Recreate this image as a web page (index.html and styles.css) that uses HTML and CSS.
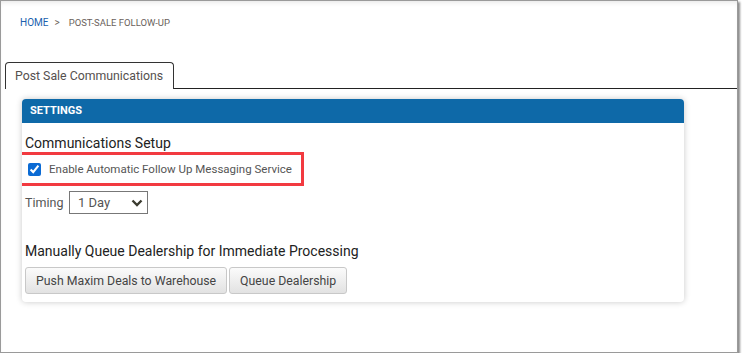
FILE: index.html
```html
<!DOCTYPE html>
<html lang="en">
<head>
    <meta charset="UTF-8">
    <meta name="viewport" content="width=device-width, initial-scale=1.0">
    <title>Post-Sale Follow-Up</title>
    <link rel="stylesheet" href="styles.css">
</head>
<body>
    <div class="frame">
        <!-- Breadcrumb -->
        <div class="crumbs">
            <a class="crumb-home" href="#">HOME</a>
            <span class="crumb-sep">&gt;</span>
            <span class="crumb-current">POST-SALE FOLLOW-UP</span>
        </div>

        <!-- Tabs -->
        <div class="tabs">
            <div class="tab active">Post Sale Communications</div>
        </div>

        <!-- Settings panel -->
        <div class="panel">
            <div class="panel-header">SETTINGS</div>
            <div class="panel-body">
                <div class="section-title">Communications Setup</div>
                <div class="highlight">
                    <label class="check-row">
                        <input type="checkbox" checked>
                        <span>Enable Automatic Follow Up Messaging Service</span>
                    </label>
                </div>
                <div class="timing-row">
                    <span class="label">Timing</span>
                    <div class="select">
                        <span>1 Day</span>
                        <svg width="12" height="8" viewBox="0 0 12 8">
                            <path d="M1.5 1.5 L6 6 L10.5 1.5" fill="none" stroke="#3b3b30" stroke-width="2.4"/>
                        </svg>
                    </div>
                </div>
                <div class="section-title queue-title">Manually Queue Dealership for Immediate Processing</div>
                <div class="buttons">
                    <button class="btn">Push Maxim Deals to Warehouse</button>
                    <button class="btn">Queue Dealership</button>
                </div>
            </div>
        </div>
    </div>
</body>
</html>
```

FILE: styles.css
```css
body {
    margin: 0;
    font-family: Roboto, "Liberation Sans", sans-serif;
    background: #fff;
}
.frame {
    box-sizing: border-box;
    width: 738px;
    height: 353px;
    border: 1px solid #9a9a9a;
    box-shadow: 2px 2px 2px rgba(0,0,0,0.45), inset 0 4px 6px -4px rgba(0,0,0,0.15);
    overflow: hidden;
}
.crumbs {
    display: flex;
    align-items: center;
    height: 20px;
    margin-top: 11px;
    padding-left: 19px;
    font-size: 10px;
    color: #6a5f5c;
    white-space: nowrap;
}
.crumb-home {
    color: #1b5fae;
    text-decoration: none;
}
.crumb-sep {
    margin: 0 9px 0 6px;
}
.crumb-current {
    font-size: 9.5px;
}
.tabs {
    display: flex;
    margin: 30px 0 0 4px;
    border-bottom: 1px solid #222;
}
.tab {
    box-sizing: border-box;
    width: 169px;
    height: 27px;
    line-height: 26px;
    padding: 0 9px;
    font-size: 12.3px;
    color: #55504e;
    white-space: nowrap;
    border: 1px solid #333;
    border-bottom: none;
    border-radius: 4px 4px 0 0;
    margin-bottom: -1px;
    background: #fff;
}
.panel {
    width: 662px;
    margin: 10px 0 0 21px;
    border-radius: 4px;
    box-shadow: 0 0 6px rgba(0,0,0,0.22);
    background: #fff;
    overflow: hidden;
}
.panel-header {
    height: 24px;
    line-height: 24px;
    padding-left: 8px;
    background: #0e69a8;
    color: #fff;
    font-size: 11px;
    font-weight: bold;
}
.panel-body {
    padding: 11px 3px 8px;
}
.section-title {
    font-size: 14px;
    line-height: 18px;
    color: #222;
    white-space: nowrap;
}
.highlight {
    display: flex;
    align-items: center;
    box-sizing: border-box;
    width: 287px;
    height: 34px;
    margin-left: -8px;
    border: 3px solid #f23a40;
}
.check-row {
    display: flex;
    align-items: center;
    font-size: 11.5px;
    color: #555;
    white-space: nowrap;
}
.check-row input {
    width: 13px;
    height: 13px;
    margin: 0 8px 0 8px;
    accent-color: #0b6bd4;
}
.timing-row {
    display: flex;
    align-items: center;
    margin-top: 5px;
    font-size: 12.5px;
    color: #555;
}
.timing-row .label {
    width: 44px;
}
.select {
    box-sizing: border-box;
    display: flex;
    align-items: center;
    justify-content: space-between;
    width: 79px;
    height: 23px;
    padding: 0 4px 0 8px;
    border: 1px solid #777;
    font-size: 13px;
    color: #555;
}
.queue-title {
    margin-top: 26px;
    line-height: 22px;
}
.buttons {
    display: flex;
    gap: 2px;
    margin-top: 5px;
}
.btn {
    box-sizing: border-box;
    height: 27px;
    padding: 0 10px;
    font-family: Roboto, "Liberation Sans", sans-serif;
    font-size: 12.3px;
    color: #444;
    white-space: nowrap;
    border: 1px solid #c8c8c8;
    border-radius: 3px;
    background: linear-gradient(#fbfbfb, #e2e2e2);
}
```
